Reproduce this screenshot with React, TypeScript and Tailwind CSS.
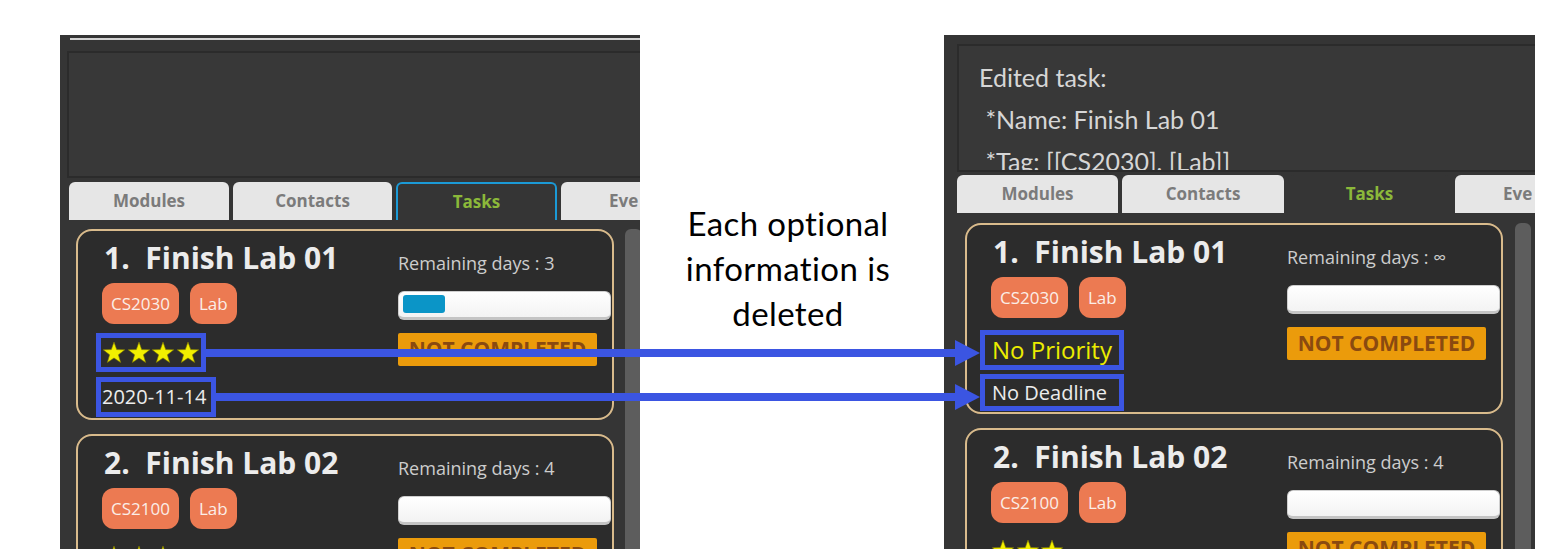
import React from "react";

const UI = { fontFamily: '"Open Sans", "Noto Sans", sans-serif' };
const CAPTION = { fontFamily: 'Lato, "Open Sans", sans-serif' };

function Star() {
  return (
    <svg width="24" height="24" viewBox="0 0 24 24" className="shrink-0">
      <polygon
        points="12,1 14.7,8.6 22.8,8.8 16.4,13.8 18.7,21.6 12,17 5.3,21.6 7.6,13.8 1.2,8.8 9.3,8.6"
        fill="#f2ef00"
        stroke="#7a7400"
        strokeWidth="0.6"
      />
    </svg>
  );
}

function Stars({ n }: { n: number }) {
  return (
    <div className="flex gap-[0.5px]">
      {Array.from({ length: n }).map((_, i) => (
        <Star key={i} />
      ))}
    </div>
  );
}

function Tag({ label }: { label: string }) {
  return (
    <div className="h-[41px] px-[9px] rounded-[12px] bg-[#ec7a52] text-[#fbeee8] text-[17px] flex items-center">
      {label}
    </div>
  );
}

function Card({
  idx,
  name,
  tags,
  remaining,
  fill,
  children,
}: {
  idx: number;
  name: string;
  tags: string[];
  remaining: string;
  fill: number;
  children?: React.ReactNode;
}) {
  return (
    <div className="w-[538px] h-[191px] shrink-0 rounded-[16px] border-2 border-[#d9bb8c] bg-[#2c2c2c] flex overflow-hidden">
      <div className="w-[320px] shrink-0 flex flex-col pl-[24px] pt-[9px]">
        <div className="h-[36px] pl-[2px] text-[30px] leading-[36px] font-bold text-[#ececec] whitespace-pre">
          {idx + ".  " + name}
        </div>
        <div className="flex gap-[11px] mt-[7px]">
          {tags.map((t) => (
            <Tag key={t} label={t} />
          ))}
        </div>
        {children}
      </div>
      <div className="flex flex-col pt-[20px]">
        <div className="text-[18px] leading-[24px] text-[#cdcdcd] whitespace-pre">
          {"Remaining days : " + remaining}
        </div>
        <div className="mt-[16px] w-[213px] h-[29px] rounded-[6px] bg-gradient-to-b from-white to-[#f3f3f3] border border-[#cfcfcf] border-b-[3px] border-b-[#c4c4c4] pt-[3px] pl-[4px]">
          {fill > 0 && (
            <div
              className="h-[18px] rounded-[3px] bg-[#0b95c7]"
              style={{ width: fill }}
            />
          )}
        </div>
        <div className="mt-[13px] w-[199px] h-[33px] rounded-[2px] bg-[#eb9b0b] text-[#8a4a10] font-bold text-[21px] flex items-center justify-center">
          NOT COMPLETED
        </div>
      </div>
    </div>
  );
}

function Tab({
  label,
  w,
  active,
  plain,
}: {
  label: string;
  w: number;
  active?: boolean;
  plain?: boolean;
}) {
  const base =
    "h-[38px] shrink-0 rounded-t-[6px] flex items-center justify-center text-[17px] font-bold";
  if (active)
    return (
      <div
        className={base + " border-2 border-b-0 border-[#1b9ad6] bg-[#353535] text-[#8bb83a]"}
        style={{ width: w }}
      >
        {label}
      </div>
    );
  if (plain)
    return (
      <div className={base + " bg-[#353535] text-[#8bb83a]"} style={{ width: w }}>
        {label}
      </div>
    );
  return (
    <div className={base + " bg-[#e6e6e6] text-[#7b7b7b] justify-center"} style={{ width: w }}>
      <span className={label === "Eve" ? "w-full pl-[48px] text-left" : ""}>{label}</span>
    </div>
  );
}

function Box({
  w,
  h,
  ml,
  mt,
  children,
  className,
}: {
  w: number;
  h: number;
  ml: number;
  mt: number;
  children: React.ReactNode;
  className?: string;
}) {
  return (
    <div
      className={
        "shrink-0 border-[5px] border-[#3b55e2] flex items-center " + (className ?? "")
      }
      style={{ width: w, height: h, marginLeft: ml, marginTop: mt }}
    >
      {children}
    </div>
  );
}

export default function App() {
  return (
    <div
      className="relative w-[1564px] h-[549px] bg-white overflow-hidden flex items-start"
      style={UI}
    >
      {/* Left screenshot */}
      <div className="mt-[35px] ml-[60px] w-[580px] h-[514px] shrink-0 bg-[#353535] overflow-hidden flex flex-col">
        <div className="mt-[3px] ml-[10px] h-[2px] bg-[#d2d2d2] shrink-0" />
        <div className="mt-[11px] ml-[7px] h-[127px] shrink-0 border-2 border-r-0 border-[#2b2b2b] bg-[#383838]" />
        <div className="mt-[4px] ml-[9px] flex gap-[4px] shrink-0">
          <Tab label="Modules" w={160} />
          <Tab label="Contacts" w={159} />
          <Tab label="Tasks" w={161} active />
          <Tab label="Eve" w={120} />
        </div>
        <div className="mt-[9px] ml-[16px] flex shrink-0">
          <div className="flex flex-col gap-[14px]">
            <Card idx={1} name="Finish Lab 01" tags={["CS2030", "Lab"]} remaining="3" fill={42}>
              <Box w={110} h={39} ml={-6} mt={9} className="pl-[1px]">
                <Stars n={4} />
              </Box>
              <Box w={120} h={40} ml={-6} mt={5}>
                <span className="text-[20px] text-[#ececec] pl-[1px]">2020-11-14</span>
              </Box>
            </Card>
            <Card idx={2} name="Finish Lab 02" tags={["CS2100", "Lab"]} remaining="4" fill={0}>
              <div className="mt-[16px]">
                <Stars n={3} />
              </div>
            </Card>
          </div>
          <div className="ml-[11px] w-[17px] h-[400px] rounded-t-[6px] bg-[#5d5d5d] shrink-0" />
        </div>
      </div>

      {/* Caption */}
      <div
        className="w-[304px] shrink-0 mt-[201px] flex flex-col items-center text-[33px] leading-[45px] tracking-[0.4px] text-black pr-[8px]"
        style={CAPTION}
      >
        <div>Each optional</div>
        <div>information is</div>
        <div>deleted</div>
      </div>

      {/* Right screenshot */}
      <div className="mt-[35px] w-[591px] h-[514px] shrink-0 bg-[#353535] overflow-hidden flex flex-col">
        <div
          className="mt-[9px] ml-[13px] h-[128px] shrink-0 border-2 border-r-0 border-[#2b2b2b] bg-[#383838] overflow-hidden pl-[20px] pt-[10px] text-[25px] leading-[42px] text-[#d6d6d6] whitespace-pre"
          style={CAPTION}
        >
          <div>Edited task:</div>
          <div>{" *Name: Finish Lab 01"}</div>
          <div>{" *Tag: [[CS2030], [Lab]]"}</div>
        </div>
        <div className="mt-[3px] ml-[13px] flex gap-[4px] shrink-0">
          <Tab label="Modules" w={161} />
          <Tab label="Contacts" w={162} />
          <Tab label="Tasks" w={163} plain />
          <Tab label="Eve" w={120} />
        </div>
        <div className="mt-[10px] ml-[21px] flex shrink-0">
          <div className="flex flex-col gap-[14px]">
            <Card idx={1} name="Finish Lab 01" tags={["CS2030", "Lab"]} remaining="∞" fill={0}>
              <Box w={144} h={40} ml={-11} mt={12} className="pl-[7px]">
                <span className="text-[24px] text-[#ecec00]">No Priority</span>
              </Box>
              <Box w={144} h={37} ml={-11} mt={4} className="pl-[7px]">
                <span className="text-[20px] text-[#ececec]">No Deadline</span>
              </Box>
            </Card>
            <Card idx={2} name="Finish Lab 02" tags={["CS2100", "Lab"]} remaining="4" fill={0}>
              <div className="mt-[16px]">
                <Stars n={3} />
              </div>
            </Card>
          </div>
          <div className="ml-[12px] w-[16px] h-[400px] rounded-t-[6px] bg-[#5d5d5d] shrink-0" />
        </div>
      </div>

      {/* Annotation arrows */}
      <svg
        className="absolute left-0 top-0 pointer-events-none"
        width="1564"
        height="549"
        viewBox="0 0 1564 549"
      >
        <rect x="206" y="349" width="752" height="8" fill="#3b55e2" />
        <polygon points="955,340 980,353 955,366" fill="#3b55e2" />
        <rect x="216" y="393" width="742" height="8" fill="#3b55e2" />
        <polygon points="955,384 980,397 955,410" fill="#3b55e2" />
      </svg>
    </div>
  );
}
